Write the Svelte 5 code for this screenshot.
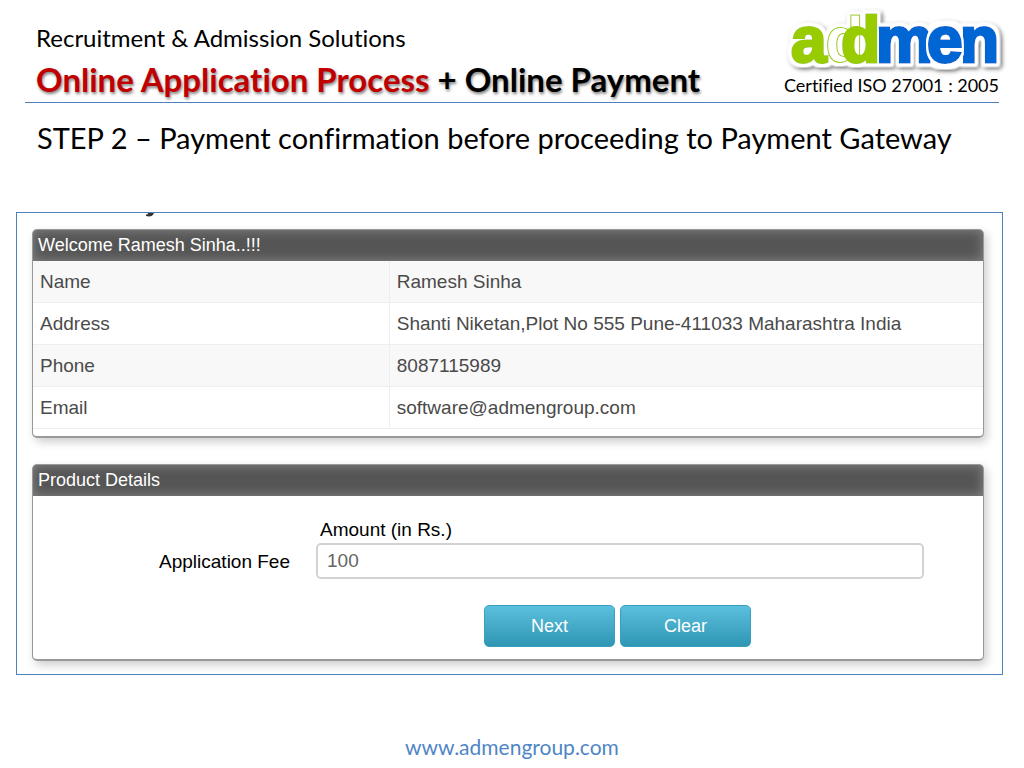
<script lang="ts">
	const details = [
		{ label: 'Name', value: 'Ramesh Sinha' },
		{ label: 'Address', value: 'Shanti Niketan,Plot No 555 Pune-411033 Maharashtra India' },
		{ label: 'Phone', value: '8087115989' },
		{ label: 'Email', value: 'software@admengroup.com' },
	];

	let amount = $state('100');

	const clear = () => {
		amount = '';
	};
</script>

<div class="page">
	<header>
		<div class="titles">
			<p class="tagline">Recruitment &amp; Admission Solutions</p>
			<h1><span>Online Application Process</span> + Online Payment</h1>
		</div>
		<div class="brand">
			<svg class="logo" viewBox="0 0 216 62" role="img" aria-label="addmen">
				<defs>
					<filter id="halo" x="-10%" y="-20%" width="120%" height="150%">
						<feMorphology in="SourceAlpha" operator="dilate" radius="2" result="grown" />
						<feGaussianBlur in="grown" stdDeviation="1" result="soft" />
						<feComponentTransfer in="soft" result="edge">
							<feFuncA type="linear" slope="3" />
						</feComponentTransfer>
						<feFlood flood-color="#fff" />
						<feComposite in2="edge" operator="in" result="white" />
						<feDropShadow in="white" dx="2" dy="2" stdDeviation="2" flood-opacity="0.6" />
						<feMerge>
							<feMergeNode />
							<feMergeNode in="SourceGraphic" />
						</feMerge>
					</filter>
					<filter id="outline" x="-20%" y="-20%" width="140%" height="140%">
						<feMorphology in="SourceAlpha" operator="dilate" radius="2" result="grown" />
						<feFlood flood-color="#fff" />
						<feComposite in2="grown" operator="in" />
						<feMerge>
							<feMergeNode />
							<feMergeNode in="SourceGraphic" />
						</feMerge>
					</filter>
				</defs>
				<g filter="url(#halo)">
					<text class="green" x="8" y="54">a</text>
					<text class="ghost" x="42" y="54">d</text>
					<text class="green" x="58" y="54">d</text>
					<text class="blue" x="93" y="54">m</text>
					<text class="blue" x="177" y="54">n</text>
					<text class="blue" x="144" y="54" filter="url(#outline)">e</text>
				</g>
			</svg>
			<p>Certified ISO 27001 : 2005</p>
		</div>
	</header>

	<h2>STEP 2 – Payment confirmation before proceeding to Payment Gateway</h2>

	<main>
		<svg class="tail" viewBox="0 0 8 4" aria-hidden="true">
			<path d="M2 0h6Q6.500 3.500 3 3.500L0 3V1.500Q2 2 2 0Z" />
		</svg>
		<section>
			<h3>Welcome Ramesh Sinha..!!!</h3>
			<table>
				<tbody>
					{#each details as { label, value }}
						<tr>
							<th scope="row">{label}</th>
							<td>{value}</td>
						</tr>
					{/each}
				</tbody>
			</table>
		</section>

		<section>
			<h3>Product Details</h3>
			<form onsubmit={(e) => e.preventDefault()}>
				<span class="column">Amount (in Rs.)</span>
				<label for="fee">Application Fee</label>
				<input id="fee" type="text" bind:value={amount} />
				<div class="actions">
					<button type="submit">Next</button>
					<button type="button" onclick={clear}>Clear</button>
				</div>
			</form>
		</section>
	</main>

	<footer>
		<a href="http://www.admengroup.com">www.admengroup.com</a>
	</footer>
</div>

<style>
	:global(body) {
		margin: 0;
		background: #fff;
	}

	.page {
		color: #000;
		font-family: Lato, "Open Sans", sans-serif;
		font-variant-ligatures: none;
	}

	p,
	h1,
	h2,
	h3 {
		margin: 0;
	}

	header {
		display: flex;
		justify-content: space-between;
		margin: 0 25px;
		padding: 8px 0 0 11px;
		border-bottom: 1px solid #4f81bd;
	}

	.titles {
		padding-top: 14px;
	}

	.tagline {
		font-size: 24px;
		line-height: 32px;
	}

	h1 {
		padding-top: 2px;
		font-size: 33px;
		line-height: 46px;
		text-shadow: 1px 2px 3px rgba(0, 0, 0, 0.5);
	}

	h1 span {
		color: #c00000;
	}

	.brand {
		display: flex;
		flex-direction: column;
		align-items: flex-end;
	}

	.brand p {
		font-size: 18px;
		line-height: 30px;
	}

	.logo {
		width: 216px;
		height: 62px;
		overflow: visible;
		font-family: "Liberation Sans", Arial, sans-serif;
		font-size: 64px;
		font-weight: bold;
	}

	.green,
	.blue {
		stroke-width: 3;
	}

	.green {
		fill: #99cc00;
		stroke: #99cc00;
	}

	.blue {
		fill: #0066d4;
		stroke: #0066d4;
	}

	.ghost {
		fill: #fff;
		stroke: #99cc00;
		stroke-width: 1;
	}

	h2 {
		padding: 15px 37px 0;
		font-size: 29px;
		font-weight: normal;
		line-height: 40px;
	}

	main {
		margin: 54px 21px 0 16px;
		padding: 0 18px 13px 15px;
		border: 1px solid #4f81bd;
		font-family: "Liberation Sans", Arial, sans-serif;
		font-size: 19px;
	}

	.tail {
		display: block;
		width: 8px;
		height: 4px;
		margin: 0 0 12px 114px;
		fill: #333;
	}

	section {
		overflow: hidden;
		border: 1px solid #999;
		border-bottom-width: 2px;
		border-radius: 5px;
		box-shadow: 3px 4px 10px rgba(0, 0, 0, 0.2);
	}

	section + section {
		margin-top: 26px;
	}

	h3 {
		padding: 0 5px;
		background: #555;
		box-shadow: inset 0 0 12px #888;
		color: #fff;
		font-size: 18px;
		font-weight: normal;
		line-height: 31px;
	}

	table {
		width: 100%;
		margin-bottom: 7px;
		border-collapse: collapse;
		color: #4a4a4a;
	}

	tr {
		border-bottom: 1px solid #eee;
	}

	tr:nth-child(odd) {
		background: #f8f8f8;
	}

	th,
	td {
		padding: 0 7px;
		font-weight: normal;
		line-height: 41px;
		text-align: left;
	}

	th {
		width: 37.5%;
		border-right: 1px solid #eee;
		box-sizing: border-box;
	}

	form {
		display: grid;
		grid-template-columns: 257px 1fr;
		column-gap: 26px;
		padding: 20px 59px 12px 0;
	}

	.column {
		grid-column: 2;
		padding-left: 4px;
		line-height: 27px;
	}

	label {
		line-height: 38px;
		text-align: right;
	}

	input {
		box-sizing: border-box;
		width: 100%;
		height: 36px;
		padding: 0 9px;
		border: 2px solid #d2d2d2;
		border-radius: 5px;
		color: #666;
		font: inherit;
	}

	.actions {
		display: flex;
		grid-column: 2;
		gap: 5px;
		padding: 24px 0 0 168px;
	}

	button {
		width: 131px;
		height: 42px;
		padding: 0;
		border: 1px solid #3a9fbe;
		border-radius: 5px;
		background: linear-gradient(#5bc0de, #2f96b4);
		color: #fff;
		font-family: inherit;
		font-size: 18px;
	}

	footer {
		padding: 55px 0 0;
		text-align: center;
	}

	a {
		color: #4f86c6;
		font-size: 21px;
		line-height: 34px;
		text-decoration: none;
	}
</style>
